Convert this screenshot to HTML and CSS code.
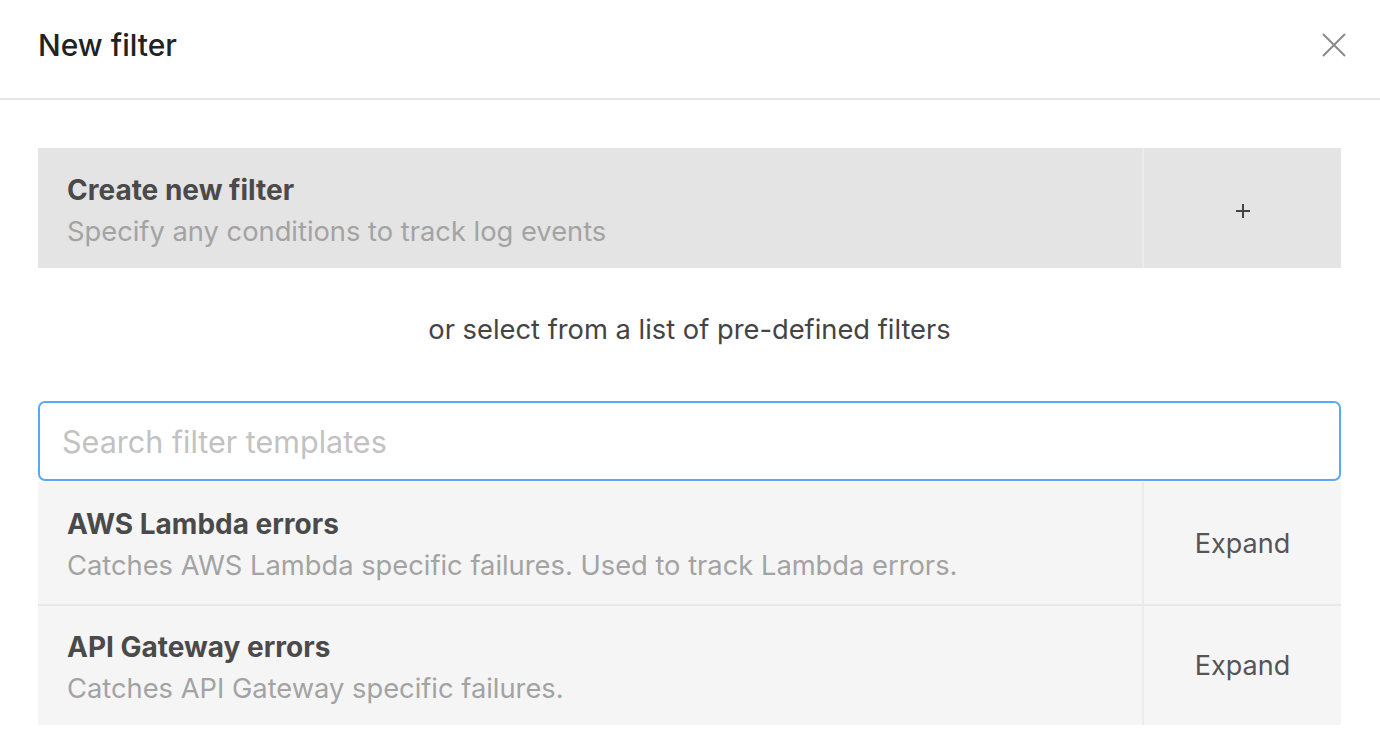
FILE: index.html
```html
<!DOCTYPE html>
<html>
<head>
<meta charset="utf-8">
<link rel="stylesheet" href="styles.css">
</head>
<body>
<div class="modal">
  <header class="modal-header">
    <h1 class="modal-title">New filter</h1>
    <button class="close-btn" aria-label="Close">
      <svg width="24" height="24" viewBox="0 0 24 24"><path d="M1 1 L23 23 M23 1 L1 23" stroke="#8a8a8a" stroke-width="2" fill="none"/></svg>
    </button>
  </header>
  <main class="modal-body">
    <div class="create-card">
      <div class="cell-main">
        <div class="item-title">Create new filter</div>
        <div class="item-desc">Specify any conditions to track log events</div>
      </div>
      <div class="cell-action plus">
        <svg width="14" height="14" viewBox="0 0 14 14"><path d="M7 0 V14 M0 7 H14" stroke="#444" stroke-width="2" fill="none"/></svg>
      </div>
    </div>
    <p class="or-text">or select from a list of pre-defined filters</p>
    <input class="search" type="text" placeholder="Search filter templates">
    <div class="template-list">
      <div class="template-row">
        <div class="cell-main">
          <div class="item-title">AWS Lambda errors</div>
          <div class="item-desc">Catches AWS Lambda specific failures. Used to track Lambda errors.</div>
        </div>
        <div class="cell-action expand">Expand</div>
      </div>
      <div class="template-row">
        <div class="cell-main">
          <div class="item-title">API Gateway errors</div>
          <div class="item-desc">Catches API Gateway specific failures.</div>
        </div>
        <div class="cell-action expand">Expand</div>
      </div>
    </div>
  </main>
</div>
</body>
</html>
```

FILE: styles.css
```css
* { box-sizing: border-box; }
html, body { margin: 0; padding: 0; background: #fff; }
body { font-family: Inter, "Noto Sans", sans-serif; color: #222; }

.modal { width: 1380px; }

.modal-header {
  height: 100px;
  border-bottom: 2px solid #e6e6e6;
  display: flex;
  align-items: center;
  justify-content: space-between;
  padding: 0 34px 8px 38px;
}
.modal-title {
  margin: 0;
  font-size: 30px;
  font-weight: 500;
  color: #222;
}
.close-btn {
  border: 0;
  background: none;
  padding: 0;
  width: 24px;
  height: 24px;
  cursor: pointer;
}

.modal-body { padding: 48px 39px 0 38px; }

.create-card {
  display: flex;
  height: 120px;
  background: #e4e4e4;
}
.cell-main {
  flex: 1;
  padding-left: 29px;
  padding-top: 10px;
  display: flex;
  flex-direction: column;
  justify-content: center;
}
.cell-action {
  width: 199px;
  border-left: 2px solid #ececec;
  display: flex;
  align-items: center;
  justify-content: center;
  color: #444;
}
.plus { padding-top: 5px; }

.item-title {
  font-size: 28px;
  font-weight: 700;
  color: #4a4a4a;
  line-height: 38px;
}
.item-desc {
  font-size: 27.3px;
  color: #a3a3a3;
  line-height: 46px;
}

.or-text {
  margin: 0;
  height: 133px;
  display: flex;
  align-items: center;
  justify-content: center;
  font-size: 27.3px;
  color: #444;
  padding-bottom: 10px;
}

.search {
  display: block;
  width: 100%;
  height: 80px;
  border: 2px solid #5aa9f2;
  border-radius: 7px;
  padding: 0 22px;
  font-family: inherit;
  font-size: 30.5px;
  color: #333;
  outline: none;
  margin: 0;
}
.search::placeholder { color: #c2c2c2; }

.template-list { margin-top: 1px; }
.template-row {
  display: flex;
  height: 122px;
  background: #f5f5f5;
}
.template-row + .template-row { border-top: 2px solid #e8e8e8; height: 121px; }
.template-row .cell-main { padding-top: 8px; }
.expand { font-size: 27px; color: #555; border-left-color: #ebebeb; }
```
